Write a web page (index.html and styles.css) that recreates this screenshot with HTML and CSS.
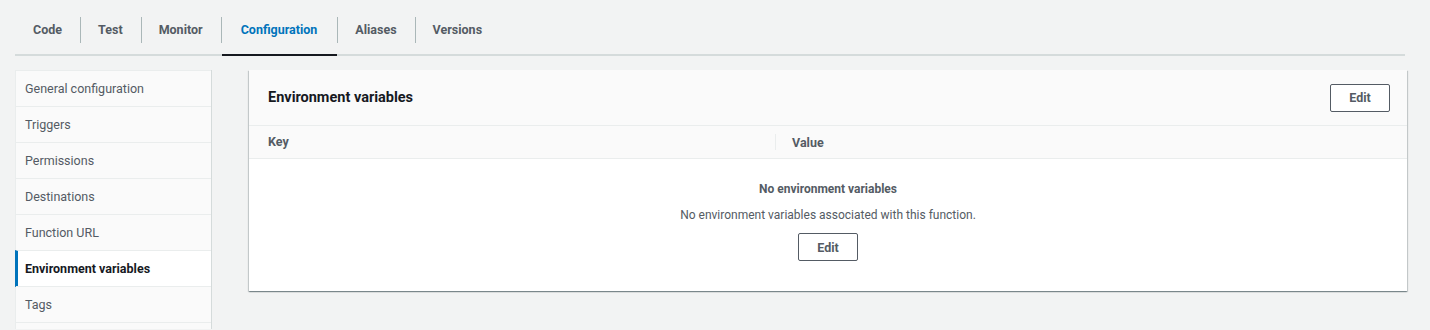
FILE: index.html
```html
<!DOCTYPE html>
<html lang="en">
<head>
    <meta charset="UTF-8">
    <meta name="viewport" content="width=device-width, initial-scale=1.0">
    <title>Configuration</title>
    <link rel="stylesheet" href="styles.css">
</head>
<body>

    <div class="tabs">
        <div class="tab">Code</div>
        <div class="tab">Test</div>
        <div class="tab">Monitor</div>
        <div class="tab active">Configuration</div>
        <div class="tab">Aliases</div>
        <div class="tab">Versions</div>
    </div>

    <div class="layout">
        <ul class="side-nav">
            <li>General configuration</li>
            <li>Triggers</li>
            <li>Permissions</li>
            <li>Destinations</li>
            <li>Function URL</li>
            <li class="selected">Environment variables</li>
            <li>Tags</li>
            <li class="cut"></li>
        </ul>

        <div class="panel">
            <div class="panel-header">
                <h2>Environment variables</h2>
                <button class="btn">Edit</button>
            </div>
            <div class="table-head">
                <div class="col key">Key</div>
                <div class="col value">Value</div>
            </div>
            <div class="empty">
                <strong>No environment variables</strong>
                <p>No environment variables associated with this function.</p>
                <button class="btn">Edit</button>
            </div>
        </div>
    </div>

</body>
</html>
```

FILE: styles.css
```css
* {
    margin: 0;
    padding: 0;
    box-sizing: border-box;
    font-family: 'Roboto', 'Liberation Sans', sans-serif;
}

body {
    background: #f2f3f3;
    color: #16191f;
    font-size: 13px;
    height: 330px;
    overflow: hidden;
}

.tabs {
    display: flex;
    margin: 0 25px 0 15px;
    padding-top: 17px;
    border-bottom: 2px solid #d5dbdb;
}

.tab {
    position: relative;
    padding: 0 18px 9px;
    height: 37px;
    line-height: 26px;
    font-size: 12.5px;
    font-weight: 700;
    color: #545b64;
}

.tab + .tab::before {
    content: "";
    position: absolute;
    left: 0;
    top: 0;
    width: 1px;
    height: 26px;
    background: #aab7b8;
}

.tab.active {
    color: #0073bb;
    padding: 0 20px 9px;
}

.tab.active::after {
    content: "";
    position: absolute;
    left: 1px;
    right: 0;
    bottom: -2px;
    height: 2px;
    background: #16191f;
}

.layout {
    display: flex;
    align-items: flex-start;
    margin-top: 14px;
    padding: 0 23px 0 15px;
    gap: 37px;
}

.side-nav {
    list-style: none;
    width: 197px;
    flex-shrink: 0;
    background: #fafafa;
    border-left: 1px solid #eaeded;
    border-right: 1px solid #d5dbdb;
}

.side-nav li {
    height: 37px;
    line-height: 35px;
    padding-left: 9px;
    font-size: 12.5px;
    color: #545b64;
    border-top: 1px solid #eaeded;
    border-bottom: 1px solid #eaeded;
    margin-bottom: -1px;
}

.side-nav li.cut {
    height: 8px;
    border-bottom: none;
}

.side-nav li.selected {
    background: #fff;
    color: #16191f;
    font-weight: 700;
    border-left: 3px solid #0073bb;
    padding-left: 7px;
    margin-left: -1px;
}

.panel {
    flex: 1;
    background: #fff;
    box-shadow: 0 1px 1px 0 rgba(0, 28, 36, 0.3), 1px 1px 1px 0 rgba(0, 28, 36, 0.15), -1px 1px 1px 0 rgba(0, 28, 36, 0.15);
}

.panel-header {
    display: flex;
    justify-content: space-between;
    align-items: center;
    height: 56px;
    padding: 0 17px 0 19px;
    background: #fafafa;
    border-bottom: 1px solid #eaeded;
}

.panel-header h2 {
    font-size: 14.5px;
    font-weight: 700;
    color: #16191f;
}

.btn {
    width: 60px;
    height: 28px;
    background: #fff;
    border: 1px solid #545b64;
    border-radius: 2px;
    color: #545b64;
    font-size: 12.5px;
    font-weight: 700;
}

.table-head {
    display: flex;
    height: 33px;
    background: #fafafa;
    border-bottom: 1px solid #eaeded;
    align-items: center;
}

.col {
    font-size: 12.5px;
    font-weight: 700;
    color: #545b64;
}

.key {
    width: 527px;
    padding-left: 19px;
    border-right: 1px solid #eaeded;
    line-height: 16px;
}

.value {
    padding-left: 16px;
}

.empty {
    display: flex;
    flex-direction: column;
    align-items: center;
    height: 132px;
    padding-top: 22px;
    color: #545b64;
}

.empty strong {
    font-size: 12px;
    line-height: 16px;
}

.empty p {
    font-size: 12px;
    line-height: 16px;
    margin-top: 10px;
}

.empty .btn {
    margin-top: 10px;
}
```
